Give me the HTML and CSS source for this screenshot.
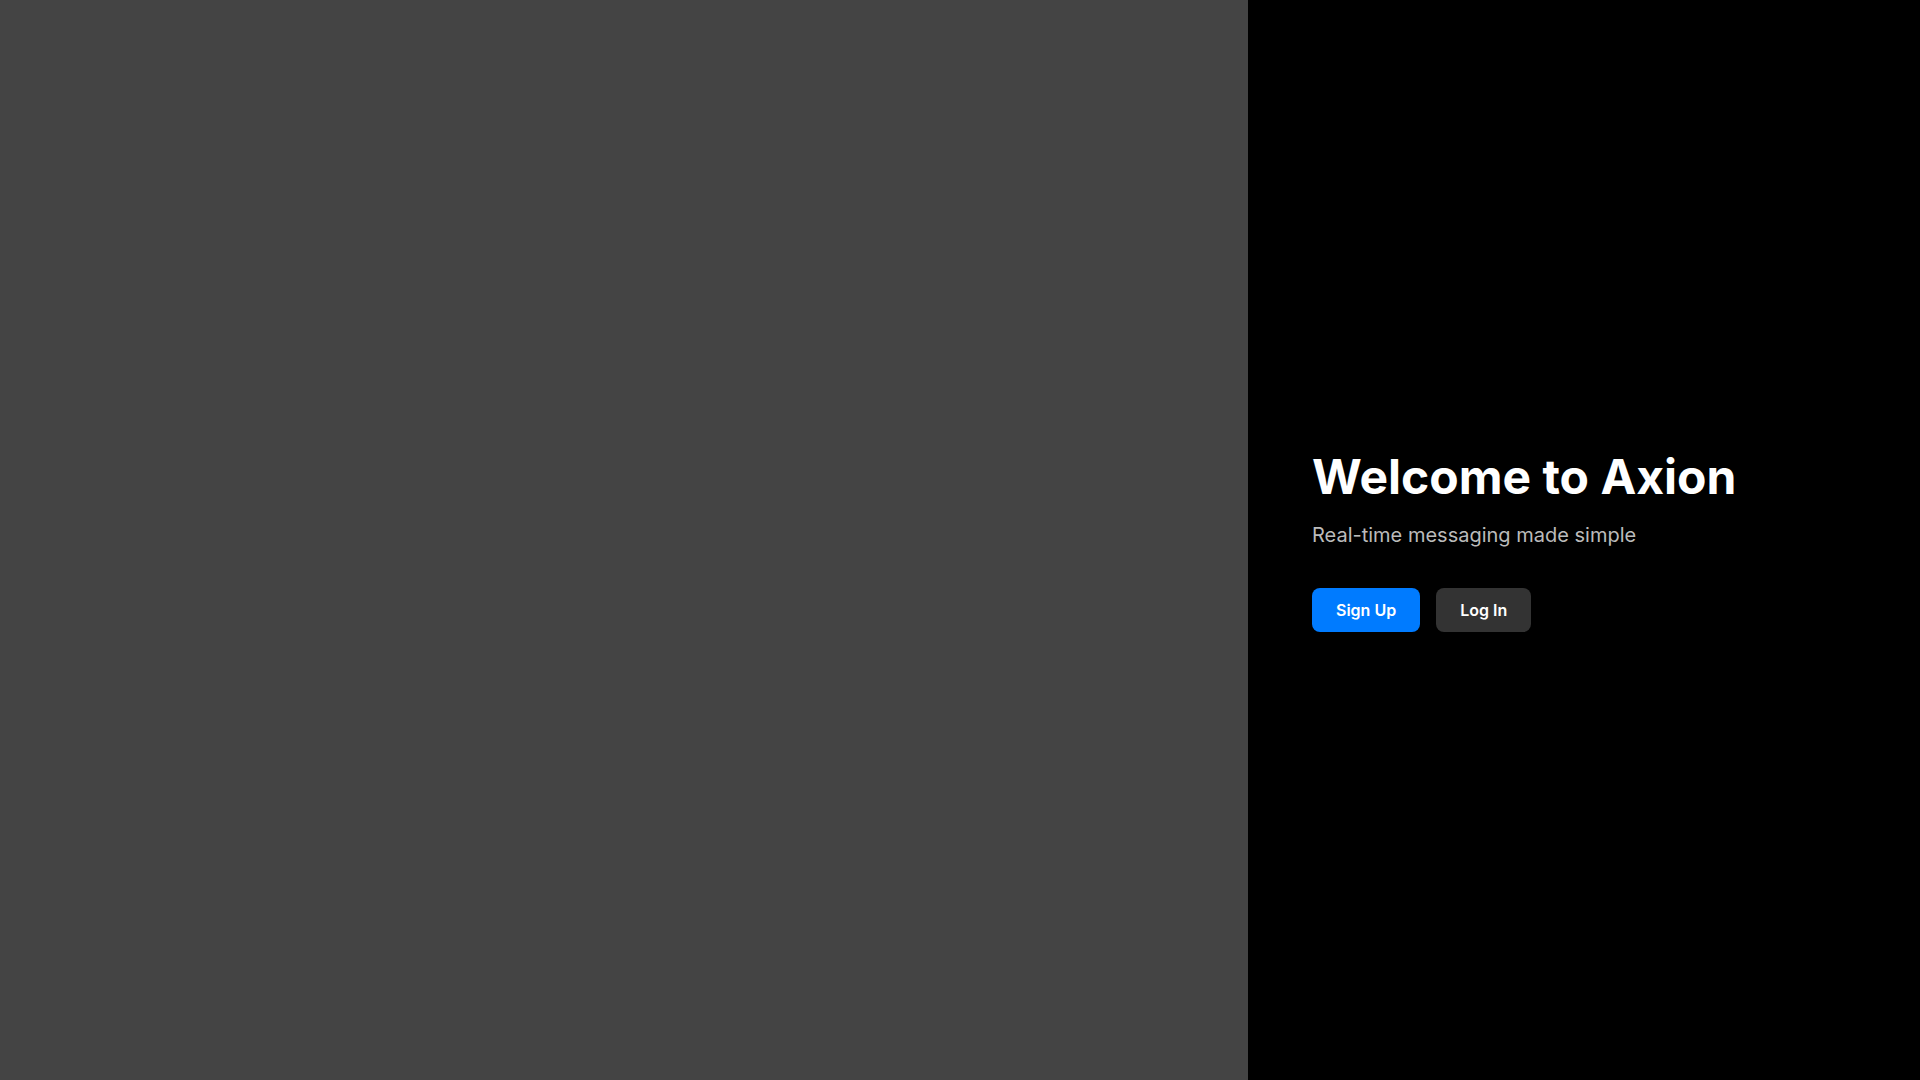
FILE: index.html
```html
<!DOCTYPE html>
<html lang="en">
<head>
<meta charset="utf-8">
<title>Axion</title>
<link rel="stylesheet" href="styles.css">
</head>
<body>
<div class="layout">
  <div class="art"></div>
  <main class="welcome">
    <h1 class="title">Welcome to Axion</h1>
    <p class="subtitle">Real-time messaging made simple</p>
    <div class="actions">
      <button class="btn btn-primary">Sign Up</button>
      <button class="btn btn-secondary">Log In</button>
    </div>
  </main>
</div>
</body>
</html>
```
FILE: styles.css
```css
* { box-sizing: border-box; }
html, body { margin: 0; height: 100%; }
body {
  font-family: Inter, "Noto Sans", sans-serif;
  background: #000;
  color: #fff;
}
.layout {
  display: flex;
  height: 100vh;
}
.art {
  flex: 0 0 65%;
  background: #444444;
}
.welcome {
  flex: 1;
  display: flex;
  flex-direction: column;
  justify-content: center;
  padding: 0 64px;
  background: #000;
}
.title {
  margin: 0;
  font-size: 48px;
  font-weight: 700;
  line-height: 1.2;
}
.subtitle {
  margin: 15px 0 0;
  font-size: 20px;
  line-height: 1.4;
  color: #bbbbbb;
}
.actions {
  display: flex;
  gap: 16px;
  margin-top: 39px;
}
.btn {
  font-family: inherit;
  font-size: 16px;
  font-weight: 600;
  line-height: 20px;
  padding: 12px 24px;
  border: none;
  border-radius: 8px;
  color: #fff;
  cursor: pointer;
}
.btn-primary { background: #007bff; }
.btn-secondary { background: #333333; }
```
